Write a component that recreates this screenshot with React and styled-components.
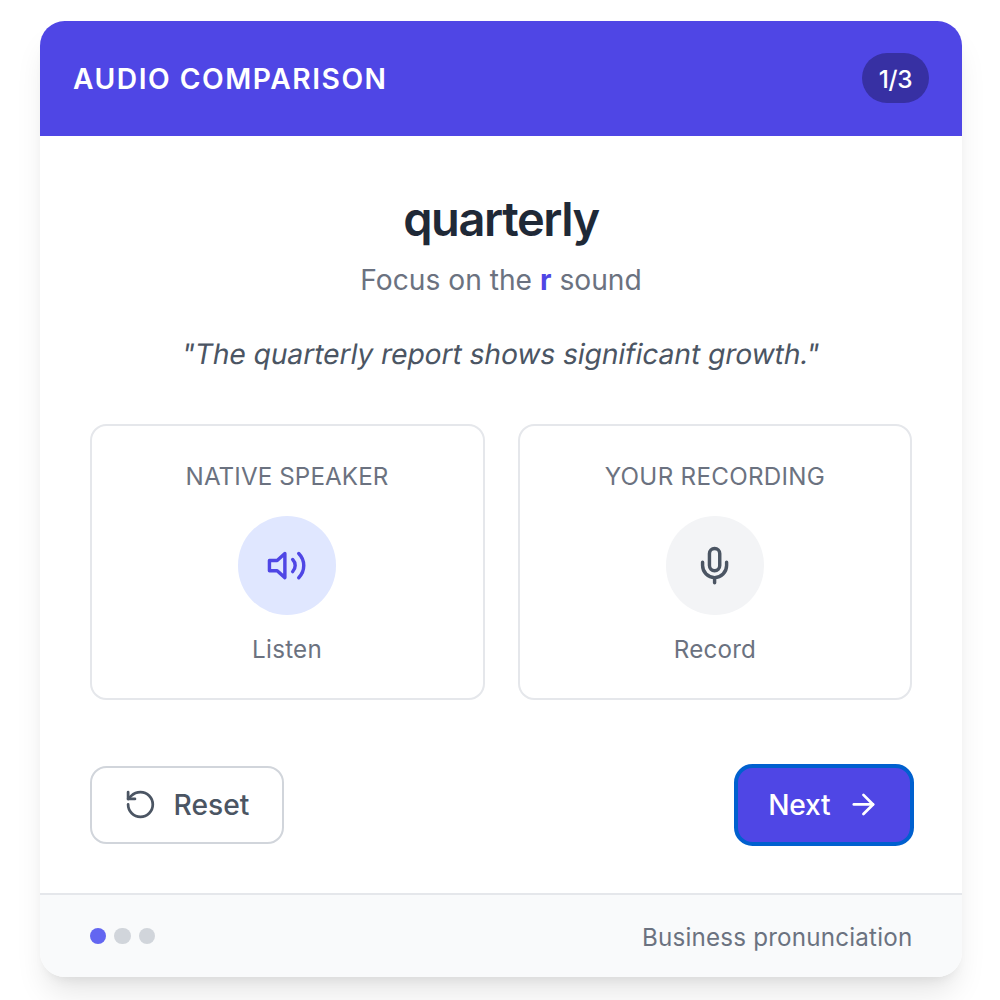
import React from "react";
import styled, { createGlobalStyle } from "styled-components";
import { ArrowRight, RotateCcw } from "lucide-react";

const GlobalStyle = createGlobalStyle`
  * { box-sizing: border-box; margin: 0; padding: 0; }
  body {
    margin: 0;
    background: #fff;
    overflow: hidden;
    font-family: Inter, "Liberation Sans", sans-serif;
    -webkit-font-smoothing: antialiased;
  }
`;

const Page = styled.main`
  height: 1000px;
  padding: 20.6px 38px 0 40px;
  overflow: hidden;
`;

const Card = styled.section`
  width: 922px;
  height: 956.6px;
  display: flex;
  flex-direction: column;
  border-radius: 24.7px;
  overflow: hidden;
  background: #fff;
  box-shadow: 0 20.6px 30.9px -6.2px rgba(0, 0, 0, 0.1),
    0 8.2px 12.3px -8.2px rgba(0, 0, 0, 0.1);
`;

const Header = styled.header`
  display: flex;
  align-items: center;
  justify-content: space-between;
  padding: 32.8px 33px 33px;
  background: #4f46e5;
  color: #fff;
`;

const Text = styled.span`
  display: block;
  white-space: nowrap;
  padding-top: ${(p) => p.$drop ?? 1}px;
  margin-bottom: ${(p) => -(p.$drop ?? 1)}px;
  font-size: ${(p) => p.$size}px;
  line-height: ${(p) => p.$line || 33}px;
  font-weight: ${(p) => p.$weight || 400};
  letter-spacing: ${(p) => p.$track || 0}px;
  color: ${(p) => p.$color || "inherit"};
`;

const Pill = styled.div`
  padding: 8.2px 16.5px;
  width: 67px;
  display: flex;
  justify-content: center;
  border-radius: 25px;
  background: #3730a3;
`;

const Body = styled.div`
  flex: 1;
  padding: 49.4px 49.6px;
  display: flex;
  flex-direction: column;
`;

const Prompt = styled.div`
  display: flex;
  flex-direction: column;
  align-items: center;
`;

const Focus = styled(Text)`
  margin-top: 8.2px;
  b { color: #4f46e5; font-weight: 700; }
`;

const Quote = styled(Text)`
  margin-top: 33px;
  transform: skewX(-10deg);
`;

const Panels = styled.div`
  display: grid;
  grid-template-columns: 1fr 1fr;
  gap: 33px;
  margin-top: 49.4px;
`;

const Panel = styled.div`
  display: flex;
  flex-direction: column;
  align-items: center;
  padding: 33px 33px 32.6px;
  border: 2px solid #e5e7eb;
  border-radius: 16.5px;
`;

const RoundButton = styled.button`
  display: grid;
  place-items: center;
  width: 98.8px;
  height: 98.8px;
  margin: 24px 0 17.2px;
  border: 0;
  border-radius: 50%;
  background: ${(p) => p.$bg};
  color: ${(p) => p.$fg};
`;

const Actions = styled.div`
  display: flex;
  justify-content: space-between;
  margin-top: 66px;
`;

const Button = styled.button`
  display: flex;
  align-items: center;
  justify-content: center;
  gap: 16.5px;
  width: ${(p) => (p.$primary ? 176.8 : 194.4)}px;
  height: 78px;
  border: ${(p) => (p.$primary ? "0" : "2px solid #d1d5db")};
  border-radius: 16.5px;
  font-family: inherit;
  background: ${(p) => (p.$primary ? "#4f46e5" : "#fff")};
  color: ${(p) => (p.$primary ? "#fff" : "#4b5563")};
  outline: ${(p) => (p.$primary ? "4px solid #0060cf" : "none")};
  outline-offset: -2px;
`;

const Footer = styled.footer`
  display: flex;
  align-items: center;
  justify-content: space-between;
  padding: 24.7px 49.6px;
  border-top: 2px solid #e5e7eb;
  background: #f9fafb;
`;

const Dots = styled.div`
  display: flex;
  gap: 8.2px;
`;

const Dot = styled.i`
  width: 16.5px;
  height: 16.5px;
  border-radius: 50%;
  background: ${(p) => (p.$active ? "#6366f1" : "#d1d5db")};
`;

const Glyph = ({ children }) => (
  <svg width="41.2" height="41.2" viewBox="0 0 24 24" fill="none" stroke="currentColor"
    strokeWidth="2" strokeLinecap="round" strokeLinejoin="round">
    {children}
  </svg>
);

const SpeakerIcon = () => (
  <Glyph>
    <polygon points="11 5 6.5 9 2 9 2 15 6.5 15 11 19 11 5" />
    <path d="M15.54 8.46a5 5 0 0 1 0 7.07" />
    <path d="M19.07 4.93a10 10 0 0 1 0 14.14" />
  </Glyph>
);

const MicIcon = () => (
  <Glyph>
    <path d="M12 2a3 3 0 0 0-3 3v7a3 3 0 0 0 6 0V5a3 3 0 0 0-3-3Z" />
    <path d="M19 10v2a7 7 0 0 1-14 0v-2" />
    <path d="M12 19v3" />
  </Glyph>
);

export default function App() {
  return (
    <>
      <GlobalStyle />
      <Page>
        <Card>
          <Header>
            <Text as="h1" $size={28.2} $weight={600} $track={1.53}>AUDIO COMPARISON</Text>
            <Pill><Text $size={24.4} $weight={500} $track={-0.3}>1/3</Text></Pill>
          </Header>
          <Body>
            <Prompt>
              <Text as="h2" $size={47} $line={65.9} $weight={600} $track={-1.4} $color="#1f2937">quarterly</Text>
              <Focus as="p" $size={28.2} $line={41.2} $color="#6b7280">Focus on the <b>r</b> sound</Focus>
              <Quote as="p" $size={28.2} $line={41.2} $track={-0.06} $color="#4b5563">"The quarterly report shows significant growth."</Quote>
            </Prompt>
            <Panels>
              <Panel>
                <Text $size={24.2} $track={0.1} $color="#6b7280">NATIVE SPEAKER</Text>
                <RoundButton $bg="#e0e7ff" $fg="#4f46e5" aria-label="Listen"><SpeakerIcon /></RoundButton>
                <Text $size={24.2} $track={0.25} $color="#6b7280">Listen</Text>
              </Panel>
              <Panel>
                <Text $size={24.2} $track={0.28} $color="#6b7280">YOUR RECORDING</Text>
                <RoundButton $bg="#f3f4f6" $fg="#4b5563" aria-label="Record"><MicIcon /></RoundButton>
                <Text $size={24.2} $track={0.2} $color="#6b7280">Record</Text>
              </Panel>
            </Panels>
            <Actions>
              <Button>
                <RotateCcw size={32.9} strokeWidth={2} />
                <Text $size={28.2} $line={41.2} $weight={500}>Reset</Text>
              </Button>
              <Button $primary>
                <Text $size={28.2} $line={41.2} $weight={500} $track={-0.2}>Next</Text>
                <ArrowRight size={32.9} strokeWidth={2} />
              </Button>
            </Actions>
          </Body>
          <Footer>
            <Dots><Dot $active /><Dot /><Dot /></Dots>
            <Text $size={24.2} $track={0.19} $color="#6b7280">Business pronunciation</Text>
          </Footer>
        </Card>
      </Page>
    </>
  );
}
